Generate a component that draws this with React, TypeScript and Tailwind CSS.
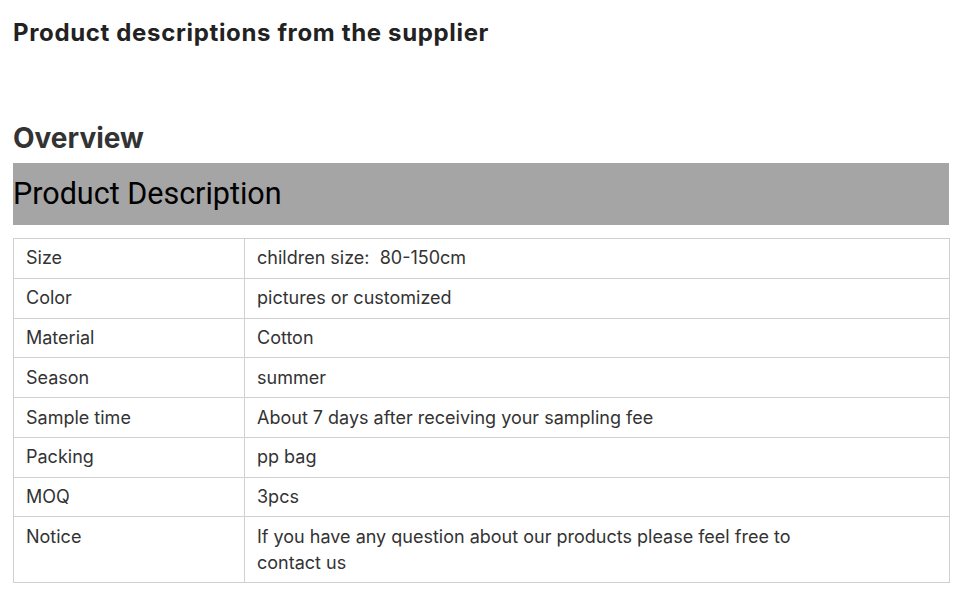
const rows: [string, React.ReactNode][] = [
  ["Size", "children size:\u00a0 80-150cm"],
  ["Color", "pictures or customized"],
  ["Material", "Cotton"],
  ["Season", "summer"],
  ["Sample time", "About 7 days after receiving your sampling fee"],
  ["Packing", "pp bag"],
  ["MOQ", "3pcs"],
  [
    "Notice",
    <>
      If you have any question about our products please feel free to
      <br />
      contact us
    </>,
  ],
];

export default function App() {
  return (
    <div className="bg-white min-h-screen px-[13px] pt-[18px] font-['Inter',sans-serif] text-[#222]">
      <h1 className="font-bold text-[24px] leading-[30px] tracking-[0.65px] text-[#222]">
        Product descriptions from the supplier
      </h1>
      <h2 className="mt-[74px] font-bold text-[28px] leading-[32px] text-[#333]">
        Overview
      </h2>
      <div className="mt-[9px] w-[936px] h-[62px] bg-[#a5a5a5] flex items-center">
        <span className="font-['Roboto',sans-serif] text-[30.5px] text-black">
          Product Description
        </span>
      </div>
      <table className="mt-[13px] w-[937px] border-collapse text-[18px] leading-[26px] text-[#333]">
        <tbody>
          {rows.map(([k, v], i) => (
            <tr key={i}>
              <td className="w-[231px] border border-[#d0d0d0] px-[12px] py-[6.4px] align-top">
                {k}
              </td>
              <td className="border border-[#d0d0d0] px-[12px] py-[6.4px] align-top">
                {v}
              </td>
            </tr>
          ))}
        </tbody>
      </table>
    </div>
  );
}
